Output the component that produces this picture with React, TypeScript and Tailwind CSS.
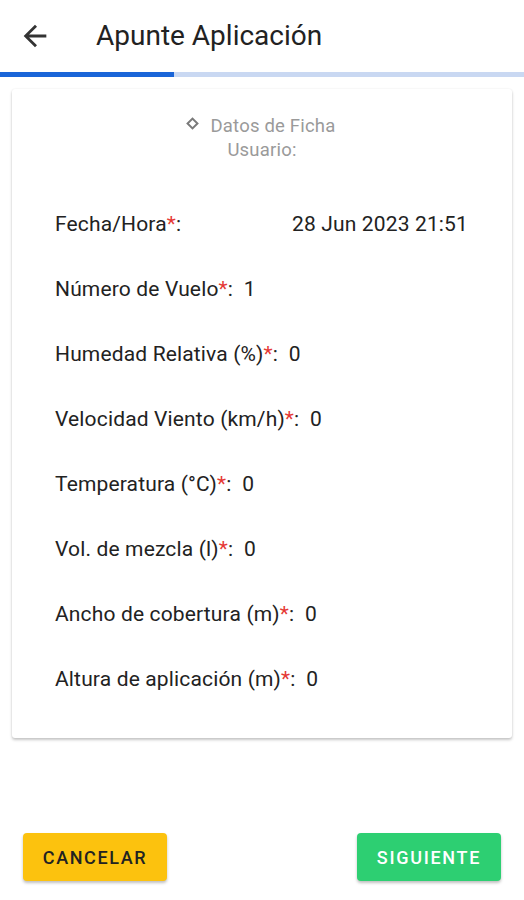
const fields = [
  { label: 'Número de Vuelo', value: '1' },
  { label: 'Humedad Relativa (%)', value: '0' },
  { label: 'Velocidad Viento (km/h)', value: '0' },
  { label: 'Temperatura (°C)', value: '0' },
  { label: 'Vol. de mezcla (l)', value: '0' },
  { label: 'Ancho de cobertura (m)', value: '0' },
  { label: 'Altura de aplicación (m)', value: '0' },
];

function BackArrow() {
  return (
    <svg width="34" height="34" viewBox="0 0 24 24" fill="#333">
      <path d="M20 11H7.83l5.59-5.59L12 4l-8 8 8 8 1.41-1.41L7.83 13H20v-2z" />
    </svg>
  );
}

export default function App() {
  return (
    <div className="w-[524px] h-[900px] bg-white flex flex-col font-['Roboto',sans-serif] text-[#222]">
      {/* app bar */}
      <div className="h-[72px] flex items-center pl-[18px] gap-[44px]">
        <BackArrow />
        <h1 className="text-[28px] font-normal text-[#222]">Apunte Aplicación</h1>
      </div>

      {/* progress */}
      <div className="h-[5px] bg-[#c9d8f2] flex">
        <div className="w-[174px] bg-[#1a65d8]" />
      </div>

      <div className="px-3 pt-[12px]">
        <div className="bg-white rounded-[3px] shadow-[0_2px_3px_rgba(0,0,0,0.22),0_0_2px_rgba(0,0,0,0.08)] pt-[25px] pb-[45px]">
          <div className="text-center text-[18.5px] leading-[24px] text-[#9a9a9a] tracking-[0.2px]">
            <span className="inline-block w-[9px] h-[9px] border-2 border-[#7a7a7a] rotate-45 mr-[13px] mb-[4px]" />
            Datos de Ficha
            <br />
            Usuario:
          </div>

          <div className="mt-[48px] pl-[43px] pr-[44px] flex flex-col gap-[37px] text-[21px] leading-[28px] tracking-[0.15px]">
            <div className="flex justify-between">
              <span>
                Fecha/Hora<span className="text-[#e53935]">*</span>:
              </span>
              <span>28 Jun 2023 21:51</span>
            </div>
            {fields.map((f) => (
              <div key={f.label}>
                {f.label}
                <span className="text-[#e53935]">*</span>:&nbsp;&nbsp;{f.value}
              </div>
            ))}
          </div>
        </div>
      </div>

      <div className="flex-1" />

      <div className="flex justify-between px-[23px] pb-[19px]">
        <button className="w-[144px] h-[48px] rounded-[4px] bg-[#fcc20e] text-[#222] text-[18px] font-medium tracking-[1.6px] shadow-[0_2px_3px_rgba(0,0,0,0.25)]">
          CANCELAR
        </button>
        <button className="w-[144px] h-[48px] rounded-[4px] bg-[#2dcf72] text-white text-[18px] font-medium tracking-[1.7px] shadow-[0_2px_3px_rgba(0,0,0,0.25)]">
          SIGUIENTE
        </button>
      </div>
    </div>
  );
}
